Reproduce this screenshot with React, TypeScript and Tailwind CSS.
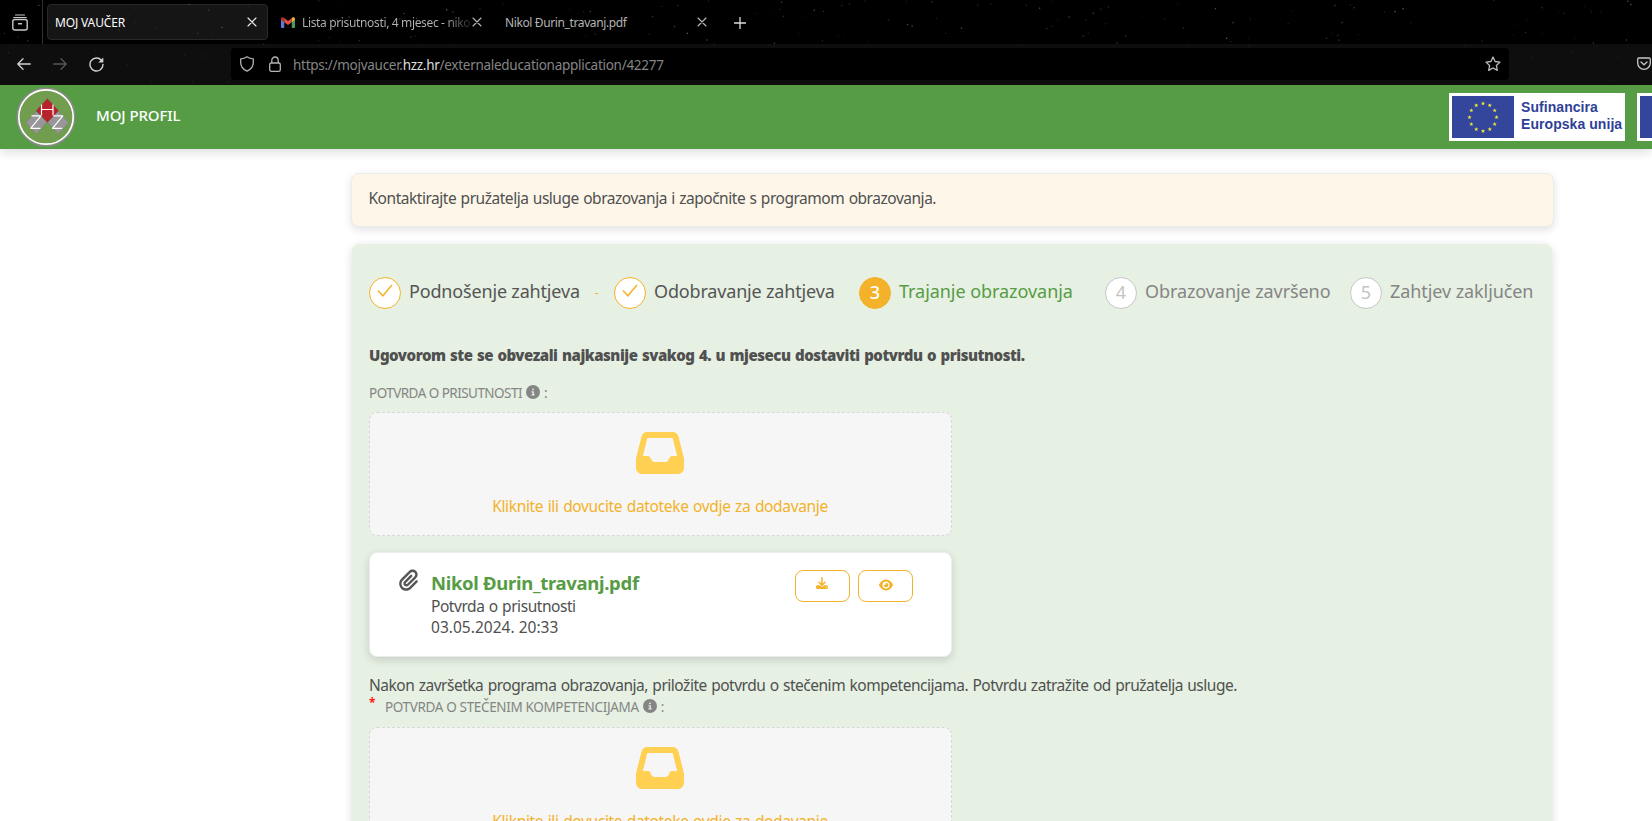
import type { ReactNode } from "react";
import { FaCircleInfo, FaDownload, FaEye, FaInbox, FaPaperclip } from "react-icons/fa6";

const UI_FONT = "font-['Noto_Sans','Open_Sans',sans-serif]";

const STARS = Array.from({ length: 330 }, (_, i) => {
  const n = i + 1;
  return {
    x: (n * 397.31 + ((n * n * 13.7) % 91)) % 1652,
    y: (n * 29.77 + ((n * n * 7.3) % 37)) % 85,
    r: 0.35 + ((n * 17) % 10) / 20,
    o: 0.12 + ((n * 31) % 13) / 36,
  };
});

function StarField() {
  return (
    <svg className="pointer-events-none absolute inset-0" width="1652" height="85" viewBox="0 0 1652 85">
      {STARS.filter((s) => s.y < 46 || s.x < 228 || s.x > 1512).map((s, i) => (
        <circle key={i} cx={s.x} cy={s.y} r={s.r} fill="#cfcfcf" opacity={s.y > 44 ? s.o * 0.35 : s.o} />
      ))}
    </svg>
  );
}

function CloseIcon({ bright = false }: { bright?: boolean }) {
  return (
    <svg width="10" height="10" viewBox="0 0 10 10" className={bright ? "text-[#f2f2f2]" : "text-[#b8b8b8]"}>
      <path d="M1 1l8 8M9 1L1 9" stroke="currentColor" strokeWidth="1.1" strokeLinecap="round" />
    </svg>
  );
}

function GmailIcon() {
  return (
    <svg width="14" height="11" viewBox="0 0 14 11" className="shrink-0">
      <path d="M0 2.2l3.2 2.4V11H1a1 1 0 0 1-1-1z" fill="#5b7be0" />
      <path d="M14 2.2l-3.2 2.4V11H13a1 1 0 0 0 1-1z" fill="#4a9f58" />
      <path d="M10.8 1l.6-.5C12.5-.3 14 .4 14 1.7v1.1l-3.2 2.4z" fill="#e8b53a" />
      <path d="M3.2 1l-.6-.5C1.5-.3 0 .4 0 1.7v1.1l3.2 2.4z" fill="#b0302c" />
      <path d="M3.2 1L7 3.9 10.8 1v4.2L7 8 3.2 5.2z" fill="#dd4f43" />
    </svg>
  );
}

function TabBar() {
  return (
    <div className="flex h-11 items-start bg-black">
      <div className="flex h-11 w-[43px] items-center border-r border-[#303030] pl-3">
        <svg width="16" height="17" viewBox="0 0 16 17" fill="none" stroke="#c8c8c8" strokeWidth="1.4" strokeLinecap="round">
          <path d="M3.5 1h9M1.7 3.5h12.6" strokeWidth="1.2" />
          <rect x=".8" y="5.5" width="14.4" height="10.5" rx="2" />
          <path d="M6.5 9.8h3" />
        </svg>
      </div>
      <div className="ml-1 mt-1 flex h-9 w-[221px] items-center justify-between rounded border border-[#292929] bg-[#151515] pl-[7px] pr-2.5">
        <span className="pt-0.5 text-xs tracking-[-0.15px] text-[#fbfbfb]">MOJ VAUČER</span>
        <CloseIcon bright />
      </div>
      <div className="mt-1 flex h-9 w-[225px] items-center pl-[13px]">
        <GmailIcon />
        <span className="ml-[7px] w-[168px] overflow-hidden whitespace-nowrap bg-linear-to-r from-[#b4b4b4] from-85% to-[#222] bg-clip-text pt-0.5 text-xs tracking-[-0.35px] text-transparent">
          Lista prisutnosti, 4 mjesec - niko
        </span>
        <span className="ml-[2px] flex"><CloseIcon /></span>
      </div>
      <div className="mt-1 flex h-9 w-[225px] items-center justify-between pl-3 pr-[11px]">
        <span className="pt-0.5 text-xs tracking-[-0.38px] text-[#b4b4b4]">Nikol Đurin_travanj.pdf</span>
        <CloseIcon />
      </div>
      <div className="mt-1 flex h-9 items-center pl-[16px] pt-0.5">
        <svg width="12" height="12" viewBox="0 0 12 12">
          <path d="M6 .5v11M.5 6h11" stroke="#dedede" strokeWidth="1.3" strokeLinecap="round" />
        </svg>
      </div>
    </div>
  );
}

function AddressBar() {
  return (
    <div className="flex h-[41px] items-center bg-[#0e0e0e] pb-px">
      <div className="flex w-[231px] items-center pl-[17px]">
        <svg width="14" height="12" viewBox="0 0 14 12" fill="none" stroke="#d2d2d2" strokeWidth="1.3" strokeLinecap="round" strokeLinejoin="round">
          <path d="M13.3 6H.8M6 .8L.8 6 6 11.2" />
        </svg>
        <svg className="ml-[22px]" width="14" height="12" viewBox="0 0 14 12" fill="none" stroke="#555" strokeWidth="1.3" strokeLinecap="round" strokeLinejoin="round">
          <path d="M.7 6h12.500M8 .8L13.2 6 8 11.2" />
        </svg>
        <svg className="ml-[22px]" width="15" height="15" viewBox="0 0 15 15" fill="none" stroke="#d2d2d2" strokeWidth="1.4" strokeLinecap="round">
          <path d="M12.4 3.2A6.5 6.5 0 1 0 14 7.5" />
          <path d="M14.3.5v5H9.300z" fill="#d2d2d2" stroke="none" />
        </svg>
      </div>
      <div className="flex h-8 w-[1278px] items-center rounded bg-black pl-[9px] pr-2">
        <svg width="14" height="16" viewBox="0 0 14 16" fill="none" stroke="#b4b4b4" strokeWidth="1.3" strokeLinejoin="round">
          <path d="M7 .8c1.8 1.4 3.7 2 6.3 2.1v3.6c0 4-2.4 6.9-6.3 8.7C3.1 13.4.7 10.5.7 6.5V2.9C3.300 2.800 5.200 2.200 7 .8z" />
        </svg>
        <svg className="ml-[15px]" width="12" height="16" viewBox="0 0 12 16" fill="none" stroke="#b4b4b4" strokeWidth="1.3">
          <rect x=".7" y="7" width="10.6" height="8.3" rx="1.6" />
          <path d="M2.8 7V4.200a3.200 3.200 0 0 1 6.400 0V7" />
        </svg>
        <span className="ml-3 grow whitespace-nowrap pt-0.5 text-[13.5px] tracking-[-0.28px] text-[#858585]">
          https://mojvaucer.<span className="text-[#dcdcdc]">hzz.hr</span>/externaleducationapplication/42277
        </span>
        <svg width="16" height="16" viewBox="0 0 16 16" fill="none" stroke="#bcbcbc" strokeWidth="1.3" strokeLinejoin="round">
          <path d="M8 1l2.1 4.5 4.9.6-3.6 3.4.9 4.9L8 12l-4.3 2.4.9-4.9L1 6.1l4.9-.6z" />
        </svg>
      </div>
      <svg className="ml-[128px] shrink-0" width="14" height="14" viewBox="0 0 14 14" fill="none" stroke="#c8c8c8" strokeWidth="1.3" strokeLinecap="round" strokeLinejoin="round">
        <path d="M2 1h10a1.3 1.3 0 0 1 1.3 1.3V6A6.3 6.3 0 0 1 .7 6V2.3A1.3 1.3 0 0 1 2 1z" />
        <path d="M4 5l3 2.8L10 5" />
      </svg>
    </div>
  );
}

function HzzLogo() {
  return (
    <svg width="60" height="60" viewBox="0 0 60 60" className="shrink-0">
      <circle cx="30" cy="30" r="28.7" fill="#709d4e" stroke="#8b8a8b" strokeWidth="1.8" />
      <circle cx="30" cy="30" r="27.2" fill="none" stroke="#fff" strokeWidth="1.7" />
      <path d="M20.500 24.200L31.200 35 20.500 46.800 9.800 35.700z" fill="#989698" stroke="#7e7d7e" strokeWidth=".6" />
      <path d="M42.100 24.200L52.800 35.700 42.100 46.800 31.200 35z" fill="#989698" stroke="#7e7d7e" strokeWidth=".6" />
      <path d="M31.400 11.700L42.400 23.700 31.400 35.300 20.300 23.700z" fill="#b6232a" stroke="#8b3b3b" strokeWidth=".6" />
      <g fill="none" stroke="#fff" strokeWidth="1.2" strokeLinejoin="round">
        <path d="M25.500 17.500v10.800M37 17.500v10.800M25.500 22.500H37" />
        <path d="M15.500 28.900h9.500L14.700 41.300h9.800M37.300 28.900h9.500L36.500 41.300h9.800" />
      </g>
    </svg>
  );
}

function starPoints(cx: number, cy: number, r: number) {
  return Array.from({ length: 10 }, (_, i) => {
    const rad = i % 2 ? r * 0.42 : r;
    const a = (Math.PI / 5) * i - Math.PI / 2;
    return `${cx + rad * Math.cos(a)},${cy + rad * Math.sin(a)}`;
  }).join(" ");
}

function EuFlag() {
  return (
    <svg width="62" height="42" viewBox="0 0 62 42" className="shrink-0">
      <rect width="62" height="42" fill="#34459c" />
      {Array.from({ length: 12 }, (_, i) => {
        const a = (Math.PI / 6) * i;
        return <polygon key={i} points={starPoints(31 + 13.5 * Math.cos(a), 21.3 + 13.8 * Math.sin(a), 2.2)} fill="#f3ea3b" />;
      })}
    </svg>
  );
}

function EuBadge() {
  return (
    <div className="flex h-12 w-44 shrink-0 items-center bg-white pl-[3px]">
      <EuFlag />
      <div className="-mt-0.5 ml-[7px] whitespace-nowrap font-['Liberation_Sans',Arial,sans-serif] text-[14px] font-bold leading-[17.5px] tracking-[0.06px] text-[#2f3f98]">
        Sufinancira
        <br />
        Europska unija
      </div>
    </div>
  );
}

function SiteHeader() {
  return (
    <header className="flex h-16 shrink-0 items-center bg-[#569c45] shadow-[0_3px_10px_rgba(0,0,0,0.14)]">
      <div className="flex w-full items-center pl-4">
        <HzzLogo />
        <span className="-mt-1 ml-5 grow text-[15px] font-medium leading-5 tracking-[-0.1px] text-white">MOJ PROFIL</span>
        <EuBadge />
        <div className="ml-3 flex h-12 w-[15px] shrink-0 items-center overflow-hidden bg-white pl-[3px]">
          <EuFlag />
        </div>
      </div>
    </header>
  );
}

function CheckMark() {
  return (
    <svg width="16" height="14" viewBox="0 0 16 14" fill="none" stroke="#f3b229" strokeWidth="1.5" className="-mt-1">
      <path d="M1 6.5l4.8 5.3L15 1" />
    </svg>
  );
}

type StepState = "done" | "active" | "pending";

function Step({ state, n, label, width }: { state: StepState; n: number; label: string; width: string }) {
  const circle =
    state === "done"
      ? "border-[#f3b229] bg-white"
      : state === "active"
        ? "border-[#f3b229] bg-[#f3b229] text-white font-medium"
        : "border-[#c6c6c6] bg-white text-[#c4c4c4]";
  const text =
    state === "done"
      ? "text-[#555] tracking-[-0.17px]"
      : state === "active"
        ? "text-[#569c45] tracking-[-0.05px]"
        : "text-[#858585] tracking-[-0.08px]";
  return (
    <div className={`flex shrink-0 items-center ${width}`}>
      <div className={`flex size-8 shrink-0 items-center justify-center rounded-full border text-lg leading-none ${circle}`}>
        {state === "done" ? <CheckMark /> : <span className="-mt-0.5">{n}</span>}
      </div>
      <span className={`-mt-1 ml-2 whitespace-nowrap text-lg leading-8 ${text}`}>{label}</span>
      {n === 1 && <span className="ml-[15px] h-px w-[3px] bg-[#f3b229]" />}
    </div>
  );
}

function FieldLabel({ children, required = false }: { children: ReactNode; required?: boolean }) {
  return (
    <div className="flex h-[22px] items-center text-[13.5px] text-[#858585]">
      {required && <span className="-mt-2 w-4 shrink-0 text-xs font-bold text-[#ff1a1a]">*</span>}
      {children}
      <FaCircleInfo className="-mt-0.5 ml-1 size-3.5" />
      <span className="ml-1">:</span>
    </div>
  );
}

function Dropzone() {
  return (
    <div className="flex h-[124px] w-[583px] shrink-0 flex-col items-center rounded-lg border border-dashed border-[#d6d8d5] bg-[#f6f6f6] pr-px pt-4">
      <FaInbox className="size-12 text-[#ffd052]" />
      <span className="mt-[17px] text-[15.5px] leading-6 tracking-[-0.34px] text-[#f3b229] [word-spacing:0.8px]">
        Kliknite ili dovucite datoteke ovdje za dodavanje
      </span>
    </div>
  );
}

function IconButton({ children, label }: { children: ReactNode; label: string }) {
  return (
    <button aria-label={label} className="flex h-8 w-[55px] items-center justify-center rounded-lg border border-[#f3b229] bg-white text-[#f3b229]">
      {children}
    </button>
  );
}

function FileCard() {
  return (
    <div className="flex h-[105px] w-[583px] items-start rounded-lg border border-[#ececec] bg-white pl-[29px] pr-[38px] pt-[17px] shadow-[0_3px_8px_rgba(0,0,0,0.14)]">
      <FaPaperclip className="-mt-px h-[22px] w-[19px] text-[#555]" />
      <div className="ml-[13px] grow">
        <div className="text-[18.5px] font-bold leading-[26px] tracking-[-0.31px] text-[#569c45]">Nikol Đurin_travanj.pdf</div>
        <div className="text-[15.5px] leading-[21px] tracking-[-0.45px] text-[#505050] [word-spacing:0.8px]">Potvrda o prisutnosti</div>
        <div className="text-[15.5px] leading-[21px] tracking-[0.02px] text-[#505050]">03.05.2024. 20:33</div>
      </div>
      <div className="flex gap-2">
        <IconButton label="Preuzmi"><FaDownload className="-mt-1.5 mr-px size-3" /></IconButton>
        <IconButton label="Pregledaj"><FaEye className="-mt-0.5 size-3.5" /></IconButton>
      </div>
    </div>
  );
}

export default function App() {
  return (
    <div className={`flex h-[821px] w-[1652px] flex-col overflow-hidden bg-white ${UI_FONT}`}>
      <div className="relative shrink-0">
        <TabBar />
        <AddressBar />
        <StarField />
      </div>
      <SiteHeader />
      <main className="ml-[351px] flex w-[1203px] flex-col pt-6">
        <div className="flex h-[54px] shrink-0 items-center rounded-lg border border-[#ececea] bg-[#fdf6e9] pb-0.5 pl-[16.5px] text-[15.5px] tracking-[-0.47px] text-[#505050] shadow-[0_3px_8px_rgba(0,0,0,0.12)] [word-spacing:0.8px]">
          Kontaktirajte pružatelja usluge obrazovanja i započnite s programom obrazovanja.
        </div>
        <section className="ml-px mr-0.5 mt-[17px] h-[700px] rounded-lg bg-[#e6f0e3] px-[17px] pt-[33px] shadow-[0_2px_10px_rgba(0,0,0,0.14)]">
          <div className="flex h-8">
            <Step state="done" n={1} label="Podnošenje zahtjeva" width="w-[245px]" />
            <Step state="done" n={2} label="Odobravanje zahtjeva" width="w-[245px]" />
            <Step state="active" n={3} label="Trajanje obrazovanja" width="w-[246px]" />
            <Step state="pending" n={4} label="Obrazovanje završeno" width="w-[245px]" />
            <Step state="pending" n={5} label="Zahtjev zaključen" width="w-[190px]" />
          </div>
          <p className="mt-[34px] text-[15px] font-black leading-6 tracking-[-0.47px] text-[#505050] [word-spacing:1px]">
            Ugovorom ste se obvezali najkasnije svakog 4. u mjesecu dostaviti potvrdu o prisutnosti.
          </p>
          <div className="mt-[15px]">
            <FieldLabel>
              <span className="tracking-[-0.54px]">POTVRDA O PRISUTNOSTI</span>
            </FieldLabel>
          </div>
          <div className="mt-2">
            <Dropzone />
          </div>
          <div className="mt-4">
            <FileCard />
          </div>
          <p className="mt-4 whitespace-nowrap text-[15.5px] leading-6 tracking-[-0.48px] text-[#505050] [word-spacing:0.8px]">
            Nakon završetka programa obrazovanja, priložite potvrdu o stečenim kompetencijama. Potvrdu zatražite od pružatelja usluge.
          </p>
          <div className="-mt-px">
            <FieldLabel required>
              <span className="tracking-[-0.35px]">POTVRDA O STEČENIM KOMPETENCIJAMA</span>
            </FieldLabel>
          </div>
          <div className="mt-[9px]">
            <Dropzone />
          </div>
        </section>
      </main>
    </div>
  );
}
